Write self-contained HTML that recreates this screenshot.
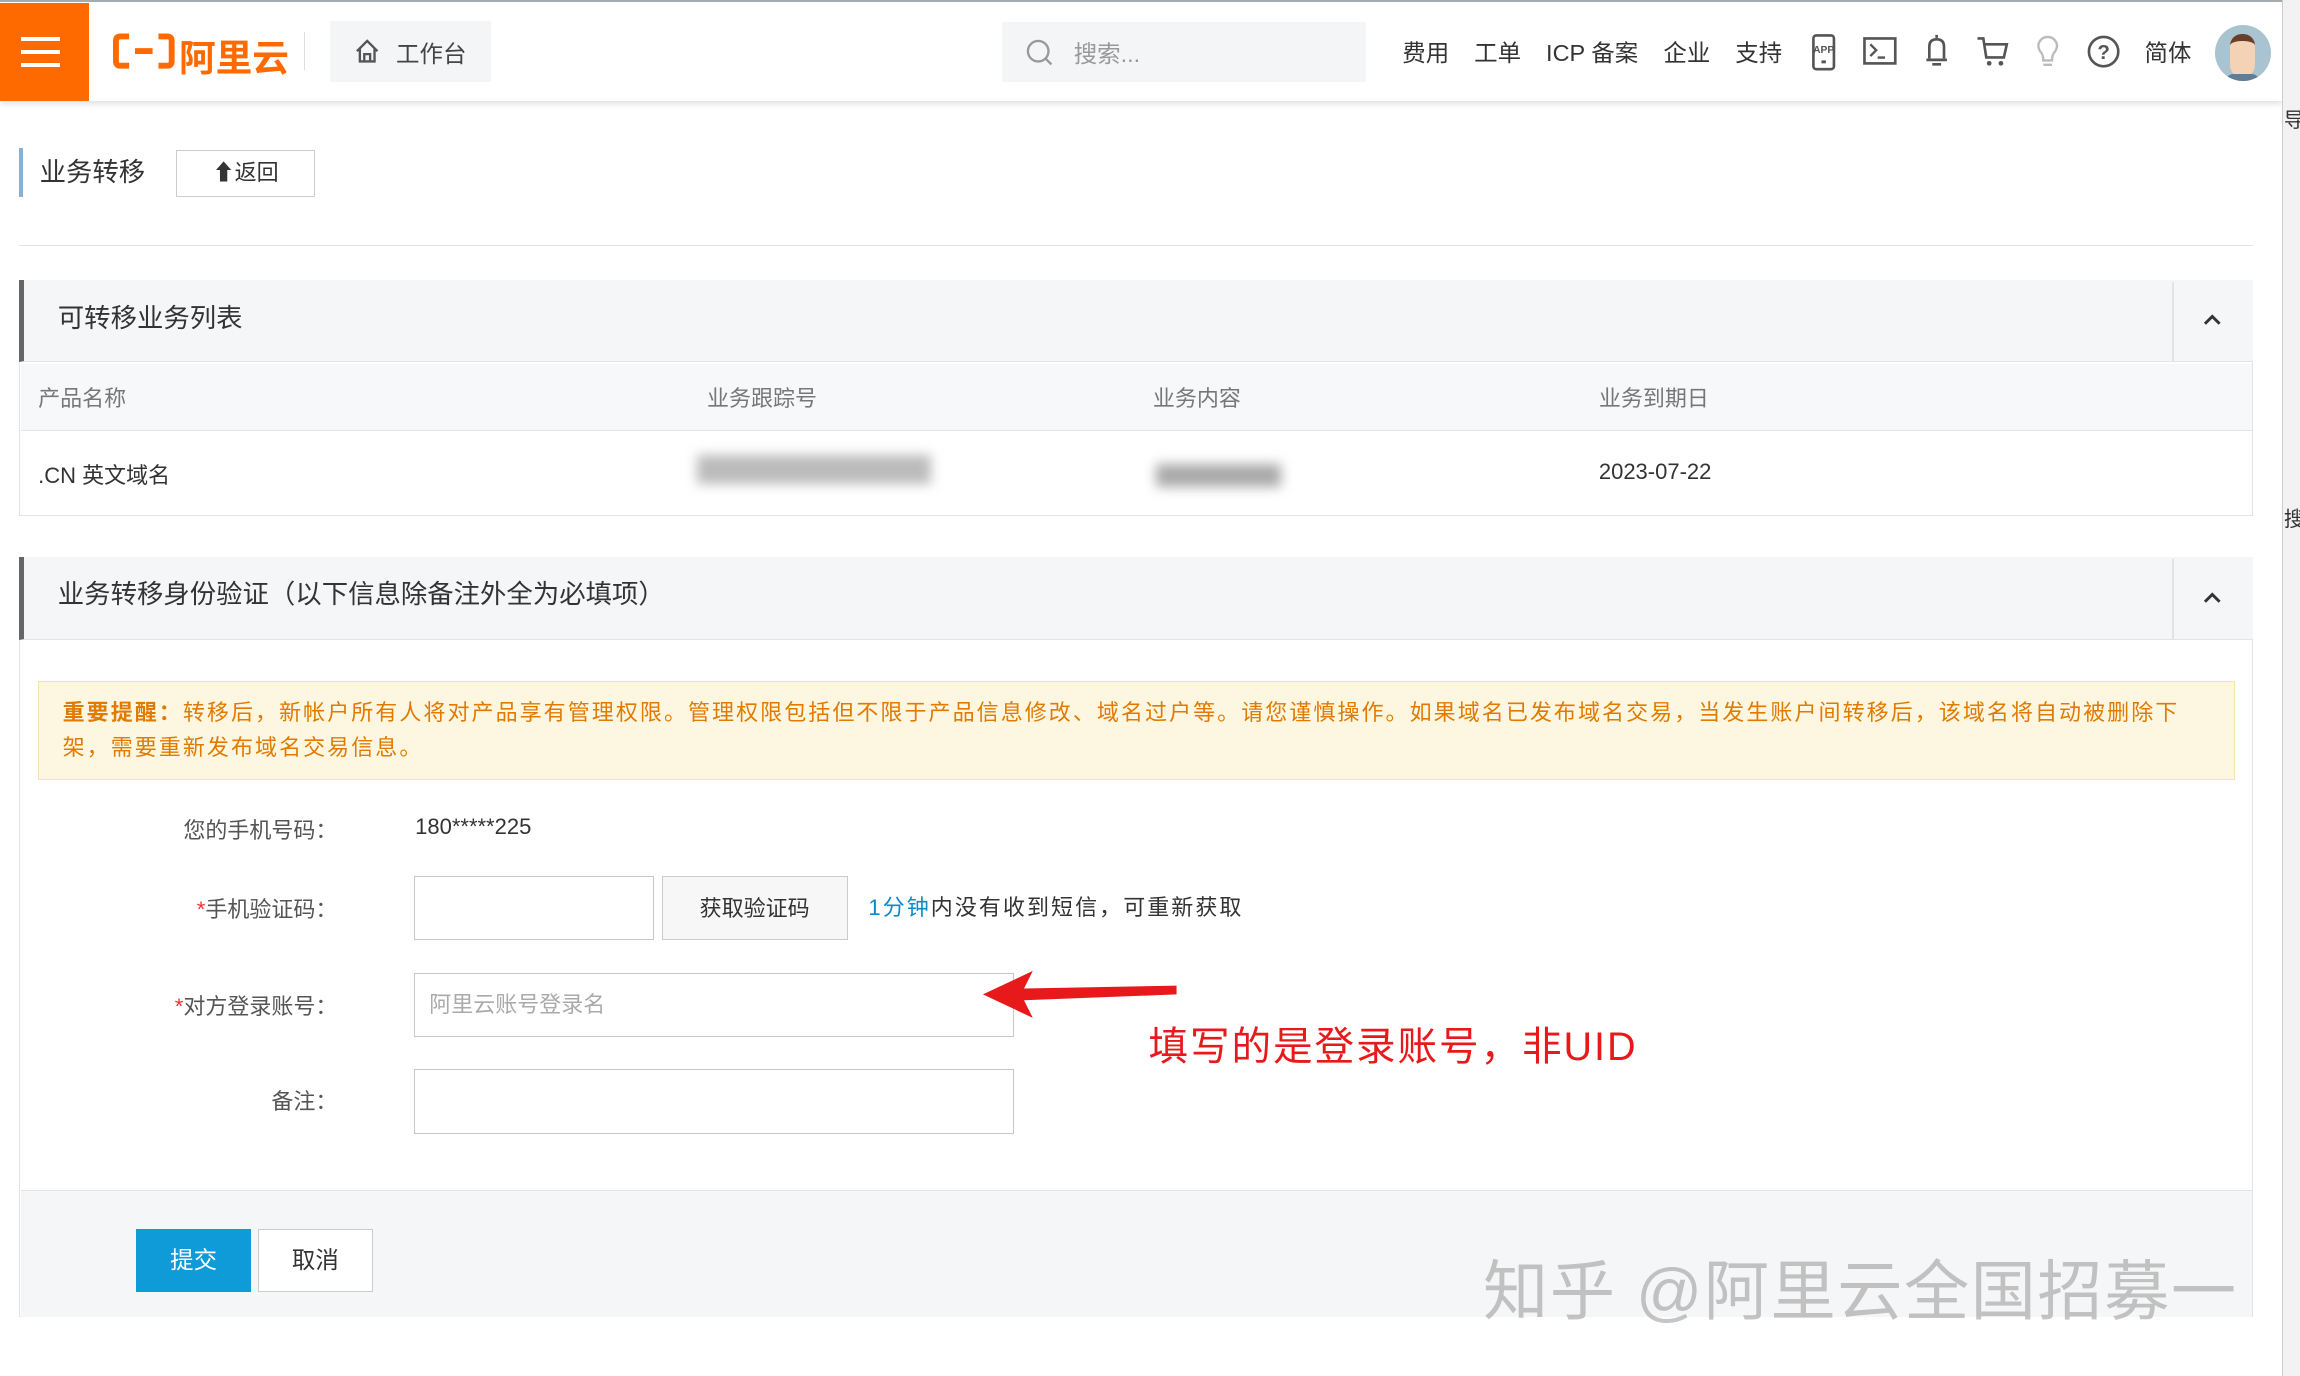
<!DOCTYPE html>
<html><head><meta charset="utf-8"><style>
html,body{margin:0;padding:0;background:#fff;overflow:hidden}
body{width:1568px;height:938px;zoom:1.46684;position:relative;font-family:"Liberation Sans","Noto Sans CJK SC",sans-serif;color:#333}
.a{position:absolute}
.hdr{left:0;top:0;width:1556px;height:69px;background:#fff;box-shadow:0 2px 4px rgba(0,0,0,.12);border-top:2px solid #a3adb1;box-sizing:border-box}
.nav{font-size:16px;color:#333;top:23px}
.panel{border:1px solid #e3e3e3;box-sizing:border-box}
.ph{background:#f5f6f7;border-left:4px solid #666;box-sizing:border-box;font-size:18px;color:#333}
.lbl{font-size:15px;color:#555;text-align:right;width:150px}
.inp{border:1px solid #c8c8c8;background:#fff;box-sizing:border-box}
</style></head><body>
<div class="a hdr"></div>
<div class="a" style="left:0;top:2px;width:61px;height:67px;background:#ff6a00"></div>
<div class="a" style="left:14px;top:25px;width:27px;height:3px;background:#fff"></div>
<div class="a" style="left:14px;top:34px;width:27px;height:3px;background:#fff"></div>
<div class="a" style="left:14px;top:43px;width:27px;height:3px;background:#fff"></div>
<svg class="a" style="left:77px;top:22px" width="42" height="26"><path d="M11 3 H5 Q2 3 2 6 V20 Q2 23 5 23 H11 M31 3 H37 Q40 3 40 6 V20 Q40 23 37 23 H31 M15 13 H27" stroke="#ff6a00" stroke-width="4" fill="none"/></svg>
<div class="a" style="left:122px;top:19px;font-size:25px;font-weight:bold;color:#ff6a00">阿里云</div>
<div class="a" style="left:207px;top:22px;width:1px;height:26px;background:#ddd"></div>
<div class="a" style="left:225px;top:14px;width:110px;height:42px;background:#f4f5f6"></div>
<svg class="a" style="left:241px;top:26px" width="18" height="18"><path d="M2 9 L9 2 L16 9 M4 7 V16 H14 V7 M7 16 V11 H11 V16" stroke="#555" stroke-width="1.6" fill="none"/></svg>
<div class="a" style="left:270px;top:24px;font-size:16px;color:#444">工作台</div>
<div class="a" style="left:683px;top:15px;width:248px;height:41px;background:#f4f5f6"></div>
<svg class="a" style="left:699px;top:26px" width="20" height="20"><circle cx="9" cy="9" r="7" stroke="#999" stroke-width="1.6" fill="none"/><path d="M14 14 L18 18" stroke="#999" stroke-width="1.6"/></svg>
<div class="a" style="left:732px;top:24px;font-size:16px;color:#999">搜索...</div>
<div class="a nav" style="left:956px">费用</div>
<div class="a nav" style="left:1005px">工单</div>
<div class="a nav" style="left:1054px">ICP 备案</div>
<div class="a nav" style="left:1134px">企业</div>
<div class="a nav" style="left:1183px">支持</div>
<svg class="a" style="left:1233px;top:23px" width="20" height="26"><rect x="3" y="1" width="14" height="23" rx="2" stroke="#555" stroke-width="1.8" fill="none"/><text x="10" y="13" font-size="7" font-weight="bold" text-anchor="middle" fill="#555" font-family="Liberation Sans">APP</text><rect x="8.5" y="18" width="3" height="2" fill="#555"/></svg>
<svg class="a" style="left:1270px;top:25px" width="24" height="20"><rect x="1" y="1" width="21" height="17" stroke="#555" stroke-width="1.8" fill="none"/><path d="M5 5 L9 9 L5 13 M10 14 H15" stroke="#555" stroke-width="1.6" fill="none"/></svg>
<svg class="a" style="left:1310px;top:22px" width="20" height="26"><path d="M10 2 V4 M5 18 V10 Q5 5 10 5 Q15 5 15 10 V18 M3 19 H17 M7 22 H13" stroke="#555" stroke-width="1.8" fill="none"/></svg>
<svg class="a" style="left:1347px;top:23px" width="24" height="24"><path d="M1 3 H5 L7 16 H19 L21 7 H6" stroke="#555" stroke-width="1.8" fill="none"/><circle cx="9" cy="20" r="1.6" fill="#555"/><circle cx="17" cy="20" r="1.6" fill="#555"/></svg>
<svg class="a" style="left:1386px;top:23px" width="20" height="26"><path d="M7 18 Q7 14 5 12 Q3 9 4 6 Q6 2 10 2 Q14 2 16 6 Q17 9 15 12 Q13 14 13 18 Z M7 21 H13" stroke="#bbb" stroke-width="1.6" fill="none"/></svg>
<svg class="a" style="left:1422px;top:23px" width="24" height="24"><circle cx="12" cy="12" r="10" stroke="#555" stroke-width="1.8" fill="none"/><text x="12" y="17" font-size="14" font-weight="bold" text-anchor="middle" fill="#555" font-family="Liberation Sans">?</text></svg>
<div class="a nav" style="left:1462px">简体</div>
<div class="a" style="left:1510px;top:17px;width:38px;height:38px;border-radius:50%;background:#a9c4d0;overflow:hidden"><div style="margin:6px auto 0;width:17px;height:25px;background:#f3d2b6;border-radius:8px;border-top:5px solid #6b3e2a"></div><div style="margin:-2px auto 0;width:24px;height:10px;background:#5d7d99;border-radius:6px 6px 0 0"></div></div>
<div class="a" style="left:1556px;top:0;width:12px;height:938px;background:#f2f2f2;border-left:1px solid #ccc"></div>
<div class="a" style="left:1557px;top:70px;font-size:14px">导</div>
<div class="a" style="left:1557px;top:342px;font-size:14px">搜</div>

<div class="a" style="left:13px;top:101px;width:3px;height:33px;background:#8ab1d3"></div>
<div class="a" style="left:27px;top:102px;font-size:18px;color:#333">业务转移</div>
<div class="a" style="left:120px;top:102px;width:95px;height:32px;border:1px solid #ccc;box-sizing:border-box;font-size:15px;text-align:center;line-height:30px">⬆返回</div>
<div class="a" style="left:13px;top:167px;width:1523px;height:1px;background:#e2e2e2"></div>

<div class="a panel" style="left:13px;top:191px;width:1523px;height:161px"></div>
<div class="a ph" style="left:13px;top:191px;width:1523px;height:56px;border-bottom:1px solid #e3e3e3"><span style="position:absolute;left:23px;top:11px">可转移业务列表</span></div>
<div class="a" style="left:1481px;top:192px;width:1px;height:55px;background:#e3e3e3"></div>
<svg class="a" style="left:1501px;top:213px" width="14" height="10"><path d="M2 8 L7 3 L12 8" stroke="#333" stroke-width="2" fill="none"/></svg>
<div class="a" style="left:14px;top:248px;width:1521px;height:45px;background:#f7f8f9;border-bottom:1px solid #e3e3e3"></div>
<div class="a" style="left:26px;top:260px;font-size:15px;color:#777">产品名称</div>
<div class="a" style="left:482px;top:260px;font-size:15px;color:#777">业务跟踪号</div>
<div class="a" style="left:786px;top:260px;font-size:15px;color:#777">业务内容</div>
<div class="a" style="left:1090px;top:260px;font-size:15px;color:#777">业务到期日</div>
<div class="a" style="left:26px;top:312px;font-size:15px;color:#333">.CN 英文域名</div>
<div class="a" style="left:475px;top:310px;width:160px;height:20px;background:#bbb;filter:blur(4px)"></div>
<div class="a" style="left:788px;top:316px;width:85px;height:16px;background:#aaa;filter:blur(4px)"></div>
<div class="a" style="left:1090px;top:313px;font-size:15px;color:#333">2023-07-22</div>

<div class="a panel" style="left:13px;top:380px;width:1523px;height:518px"></div>
<div class="a ph" style="left:13px;top:380px;width:1523px;height:56px;border-bottom:1px solid #e3e3e3"><span style="position:absolute;left:23px;top:10px">业务转移身份验证（以下信息除备注外全为必填项）</span></div>
<div class="a" style="left:1481px;top:381px;width:1px;height:55px;background:#e3e3e3"></div>
<svg class="a" style="left:1501px;top:402px" width="14" height="10"><path d="M2 8 L7 3 L12 8" stroke="#333" stroke-width="2" fill="none"/></svg>
<div class="a" style="left:26px;top:464px;width:1498px;height:68px;background:#fdf6e0;border:1px solid #f5e3b0;box-sizing:border-box;font-size:15px;color:#e07b00;line-height:24px;padding:9px 16px;letter-spacing:1.4px;white-space:nowrap;overflow:hidden">
<b>重要提醒：</b>转移后，新帐户所有人将对产品享有管理权限。管理权限包括但不限于产品信息修改、域名过户等。请您谨慎操作。如果域名已发布域名交易，当发生账户间转移后，该域名将自动被删除下<br>架，需要重新发布域名交易信息。</div>
<div class="a lbl" style="left:80px;top:554px">您的手机号码：</div>
<div class="a" style="left:283px;top:555px;font-size:15px;color:#333">180*****225</div>
<div class="a lbl" style="left:80px;top:608px"><span style="color:#e33">*</span>手机验证码：</div>
<div class="a inp" style="left:282px;top:597px;width:164px;height:44px"></div>
<div class="a" style="left:451px;top:597px;width:127px;height:44px;background:#f7f7f7;border:1px solid #ccc;box-sizing:border-box;font-size:15px;text-align:center;line-height:44px">获取验证码</div>
<div class="a" style="left:592px;top:607px;font-size:15px;color:#333;letter-spacing:1.4px"><span style="color:#0a8bc8">1分钟</span>内没有收到短信，可重新获取</div>
<div class="a lbl" style="left:80px;top:674px"><span style="color:#e33">*</span>对方登录账号：</div>
<div class="a inp" style="left:282px;top:663px;width:409px;height:44px;font-size:15px;color:#aaa;line-height:42px;padding-left:10px">阿里云账号登录名</div>
<div class="a lbl" style="left:80px;top:739px">备注：</div>
<div class="a inp" style="left:282px;top:729px;width:409px;height:44px"></div>
<svg class="a" style="left:668px;top:660px" width="136" height="36"><path d="M2 18 L36 2 L30 14 L134 12 L134 18 L30 22 L36 34 Z" fill="#e8191b"/></svg>
<div class="a" style="left:783px;top:692px;font-size:27px;color:#e8191b;letter-spacing:1.3px">填写的是登录账号，非UID</div>
<div class="a" style="left:14px;top:811px;width:1521px;height:86px;background:#f5f6f7;border-top:1px solid #e3e3e3"></div>
<div class="a" style="left:93px;top:838px;width:78px;height:43px;background:#0f9bd7;color:#fff;font-size:16px;text-align:center;line-height:43px">提交</div>
<div class="a" style="left:176px;top:838px;width:78px;height:43px;background:#fff;border:1px solid #ccc;box-sizing:border-box;font-size:16px;text-align:center;line-height:41px">取消</div>
<div class="a" style="left:1011px;top:844px;font-size:44.5px;color:rgba(150,150,150,.55);white-space:nowrap;letter-spacing:1px">知乎 @阿里云全国招募一</div>
</body></html>
